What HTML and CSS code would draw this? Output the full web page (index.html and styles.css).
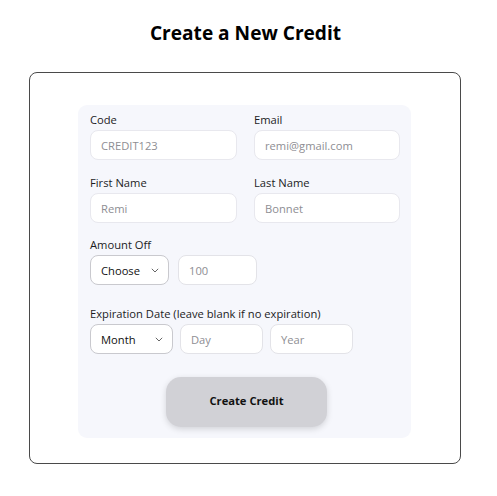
FILE: index.html
```html
<!DOCTYPE html>
<html>
<head>
<meta charset="utf-8">
<link rel="stylesheet" href="styles.css">
</head>
<body>
<h1 class="title">Create a New Credit</h1>
<div class="card">
  <form class="panel">
    <div class="grid">
      <div class="field">
        <label class="label">Code</label>
        <div class="input"><span class="ph">CREDIT123</span></div>
      </div>
      <div class="field">
        <label class="label">Email</label>
        <div class="input"><span class="ph">remi@gmail.com</span></div>
      </div>
      <div class="field">
        <label class="label">First Name</label>
        <div class="input"><span class="ph">Remi</span></div>
      </div>
      <div class="field">
        <label class="label">Last Name</label>
        <div class="input"><span class="ph">Bonnet</span></div>
      </div>
    </div>
    <div class="field amount">
      <label class="label">Amount Off</label>
      <div class="row">
        <div class="select w79"><span>Choose</span><svg class="chev" viewBox="0 0 8 5" width="8" height="5"><path d="M0.8 0.8l3.2 3.2 3.2-3.2" fill="none" stroke="#666" stroke-width="1"/></svg></div>
        <div class="input small w79"><span class="ph">100</span></div>
      </div>
    </div>
    <div class="field exp">
      <label class="label">Expiration Date (leave blank if no expiration)</label>
      <div class="row">
        <div class="select w83"><span>Month</span><svg class="chev" viewBox="0 0 8 5" width="8" height="5"><path d="M0.8 0.8l3.2 3.2 3.2-3.2" fill="none" stroke="#666" stroke-width="1"/></svg></div>
        <div class="input small w83"><span class="ph">Day</span></div>
        <div class="input small w83"><span class="ph">Year</span></div>
      </div>
    </div>
    <div class="actions">
      <button type="button" class="btn">Create Credit</button>
    </div>
  </form>
</div>
</body>
</html>
```
FILE: styles.css
```css
* { box-sizing: border-box; }
body {
  margin: 0;
  font-family: "Open Sans", "Noto Sans", sans-serif;
  color: #111;
  background: #fff;
}
.title {
  margin: 0;
  padding-top: 19px;
  padding-right: 6px;
  height: 72px;
  text-align: center;
  font-size: 19.1px;
  font-weight: 700;
  line-height: 28px;
  color: #000;
}
.card {
  margin-left: 29px;
  width: 432px;
  height: 392px;
  border: 1px solid #4a4a4a;
  border-radius: 8px;
  padding: 32px 48px 0;
}
.panel {
  width: 333px;
  height: 333px;
  background: #f6f7fc;
  border-radius: 9px;
  padding: 6px 11px 0 12px;
}
.grid {
  display: grid;
  grid-template-columns: 147px 146px;
  column-gap: 17px;
  row-gap: 2px;
}
.field { display: flex; flex-direction: column; }
.label {
  font-size: 11.2px;
  line-height: 17px;
  height: 19px;
  color: #1c1c1e;
}
.input, .select {
  height: 30px;
  background: #fff;
  border: 1px solid #e8e8ee;
  border-radius: 8px;
  display: flex;
  align-items: center;
  padding: 0 10px;
  font-size: 11.2px;
}
.ph { color: #8e8e93; }
.input { margin-bottom: 12px; }
.amount { margin-top: 1px; }
.exp { margin-top: 20px; }
.row { display: flex; gap: 9px; }
.row .input { margin-bottom: 0; }
.select {
  border-color: #c9c9ce;
  justify-content: space-between;
  color: #111;
  padding-right: 9px;
}
.input.small { border-color: #e3e3e8; }
.exp .row { gap: 7px; }
.w79 { width: 79px; }
.w83 { width: 83px; }
.actions {
  display: flex;
  justify-content: center;
  padding-left: 3px;
  margin-top: 23px;
}
.btn {
  width: 161px;
  height: 50px;
  border: none;
  border-radius: 15px;
  background: #d1d1d6;
  box-shadow: 0 2px 6px rgba(0, 0, 0, 0.15);
  font-family: "Open Sans", "Noto Sans", sans-serif;
  font-weight: 700;
  font-size: 11.2px;
  color: #111;
  padding: 0 0 3px;
}
```
